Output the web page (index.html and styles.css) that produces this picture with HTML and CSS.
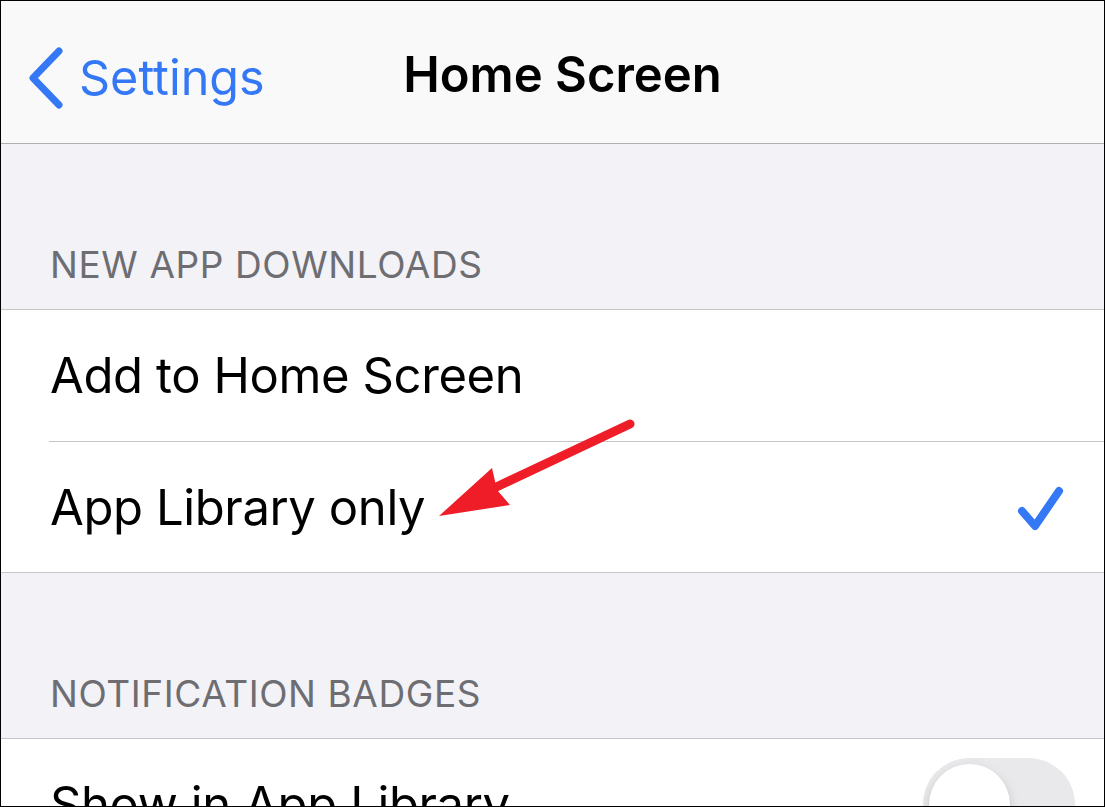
FILE: index.html
```html
<!DOCTYPE html>
<html lang="en">
<head>
    <meta charset="UTF-8">
    <meta name="viewport" content="width=device-width, initial-scale=1.0">
    <title>Home Screen</title>
    <link rel="stylesheet" href="styles.css">
</head>
<body>
   <div class="screen">
        <div class="navbar">
            <div class="back">
                <svg class="chevron" width="40" height="64" viewBox="0 0 40 64">
                    <path d="M32 5 L6 32 L32 59" fill="none" stroke="#3478f6" stroke-width="7" stroke-linecap="round" stroke-linejoin="round"/>
                </svg>
                <span>Settings</span>
            </div>
            <h1 class="title">Home Screen</h1>
        </div>

        <div class="group-header">NEW APP DOWNLOADS</div>
        <div class="group">
            <div class="row">
                <span>Add to Home Screen</span>
            </div>
            <div class="row">
                <span>App Library only</span>
                <svg class="check" width="50" height="50" viewBox="0 0 50 50">
                    <path d="M5 27 L18 42 L42 7" fill="none" stroke="#3478f6" stroke-width="8" stroke-linecap="round" stroke-linejoin="round"/>
                </svg>
            </div>
        </div>

        <div class="group-header">NOTIFICATION BADGES</div>
        <div class="group">
            <div class="row">
                <span>Show in App Library</span>
                <div class="toggle"><div class="knob"></div></div>
            </div>
        </div>

        <svg class="arrow" width="1105" height="807" viewBox="0 0 1105 807">
            <line x1="630" y1="424" x2="490" y2="490" stroke="#ee1d27" stroke-width="9" stroke-linecap="round"/>
            <polygon points="439,516 492,468 497,490 510,505" fill="#ee1d27"/>
        </svg>
   </div>
</body>
</html>
```

FILE: styles.css
```css
* { box-sizing: border-box; }
body { margin: 0; font-family: Inter, "Noto Sans", sans-serif; background: #fff; }
.screen { position: relative; width: 1105px; height: 807px; overflow: hidden; border: 1px solid #000; background: #f2f2f7; }

.navbar { position: relative; height: 143px; background: #f9f9f9; border-bottom: 1px solid #b0b0b2; display: flex; align-items: center; justify-content: center; }
.back { position: absolute; left: 26px; top: 45px; display: flex; align-items: center; color: #3478f6; font-size: 48.5px; }
.back span { margin-left: 12px; margin-top: -2px; }
.title { margin: 0; font-size: 49px; font-weight: 600; color: #000; letter-spacing: 0; margin-left: 20px; margin-top: 4px; }

.group-header { height: 165px; padding: 0 0 22px 49px; display: flex; align-items: flex-end; color: #6d6d72; font-size: 37px; letter-spacing: 0.6px; }

.group { background: #fff; border-top: 1px solid #c6c6c8; border-bottom: 1px solid #c6c6c8; }
.row { height: 131px; margin-left: 48px; padding-right: 37px; display: flex; align-items: center; justify-content: space-between; font-size: 49px; color: #000; letter-spacing: -0.4px; }
.row + .row { border-top: 1px solid #c6c6c8; }
.row span { margin-left: 1px; }
.check { margin-top: 4px; }

.toggle { width: 152px; height: 93px; border-radius: 47px; background: #e9e9eb; position: relative; margin-right: -8px; }
.knob { position: absolute; left: 6px; top: 6px; width: 81px; height: 81px; border-radius: 50%; background: #fff; box-shadow: 0 5px 12px rgba(0, 0, 0, 0.15), 0 1px 2px rgba(0, 0, 0, 0.1); }

.arrow { position: absolute; left: -1px; top: -1px; pointer-events: none; }
```
